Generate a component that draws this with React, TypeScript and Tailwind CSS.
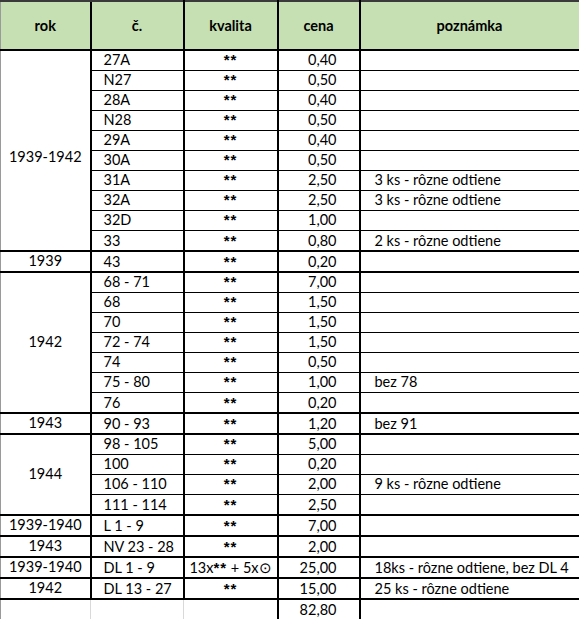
type Row = { c: string; q?: string; p: string; n?: string }
type Group = { rok: string; rows: Row[] }

const groups: Group[] = [
  {
    rok: "1939-1942",
    rows: [
      { c: "27A", p: "0,40" },
      { c: "N27", p: "0,50" },
      { c: "28A", p: "0,40" },
      { c: "N28", p: "0,50" },
      { c: "29A", p: "0,40" },
      { c: "30A", p: "0,50" },
      { c: "31A", p: "2,50", n: "3 ks - rôzne odtiene" },
      { c: "32A", p: "2,50", n: "3 ks - rôzne odtiene" },
      { c: "32D", p: "1,00" },
      { c: "33", p: "0,80", n: "2 ks - rôzne odtiene" },
    ],
  },
  { rok: "1939", rows: [{ c: "43", p: "0,20" }] },
  {
    rok: "1942",
    rows: [
      { c: "68 - 71", p: "7,00" },
      { c: "68", p: "1,50" },
      { c: "70", p: "1,50" },
      { c: "72 - 74", p: "1,50" },
      { c: "74", p: "0,50" },
      { c: "75 - 80", p: "1,00", n: "bez 78" },
      { c: "76", p: "0,20" },
    ],
  },
  { rok: "1943", rows: [{ c: "90 - 93", p: "1,20", n: "bez 91" }] },
  {
    rok: "1944",
    rows: [
      { c: "98 - 105", p: "5,00" },
      { c: "100", p: "0,20" },
      { c: "106 - 110", p: "2,00", n: "9 ks - rôzne odtiene" },
      { c: "111 - 114", p: "2,50" },
    ],
  },
  { rok: "1939-1940", rows: [{ c: "L 1 - 9", p: "7,00" }] },
  { rok: "1943", rows: [{ c: "NV 23 - 28", p: "2,00" }] },
  {
    rok: "1939-1940",
    rows: [{ c: "DL 1 - 9", q: "13x", p: "25,00", n: "18ks - rôzne odtiene, bez DL 4" }],
  },
  { rok: "1942", rows: [{ c: "DL 13 - 27", p: "15,00", n: "25 ks - rôzne odtiene" }] },
]

function Stars() {
  return <span className="font-['Liberation_Sans',sans-serif] text-[15px] font-bold tracking-[1px]">**</span>
}

export default function App() {
  return (
    <div className="w-[579px] h-[619px] overflow-hidden bg-white text-black font-['Lato',sans-serif] text-[14.5px] leading-none">
      <table className="w-[579px] border-collapse table-fixed">
        <colgroup>
          <col className="w-[90px]" />
          <col className="w-[93px]" />
          <col className="w-[94px]" />
          <col className="w-[82px]" />
          <col className="w-[220px]" />
        </colgroup>
        <thead>
          <tr className="h-[49px] bg-[#c6e0b4] font-bold">
            <th className="border-t-2 border-b-2 border-l border-l-[#9a9a9a] border-t-[#3a3a3a] border-b-black text-center pt-[2px]">rok</th>
            <th className="border-2 border-t-[#3a3a3a] border-black text-center pt-[2px]">č.</th>
            <th className="border-2 border-t-[#3a3a3a] border-black text-center pt-[2px]">kvalita</th>
            <th className="border-2 border-t-[#3a3a3a] border-black text-center pt-[2px]">cena</th>
            <th className="border-2 border-t-[#3a3a3a] border-black text-center pt-[2px]">poznámka</th>
          </tr>
        </thead>
        <tbody>
          {groups.map((g, gi) =>
            g.rows.map((r, ri) => {
              const last = ri === g.rows.length - 1
              const rb = last ? "border-b-2" : "border-b"
              return (
                <tr key={`${gi}-${ri}`} className={last ? "h-[21px]" : "h-[20px]"}>
                  {ri === 0 && (
                    <td
                      rowSpan={g.rows.length}
                      className={`border-b-2 border-black border-l border-l-[#9a9a9a] text-center align-middle ${gi === 0 ? "pt-[14px]" : ""}`}
                    >
                      {g.rok}
                    </td>
                  )}
                  <td className={`${rb} border-x-2 border-black pl-[12px] align-bottom pb-[2px]`}>{r.c}</td>
                  <td className={`${rb} border-x-2 border-black text-center align-bottom pb-[2px] whitespace-nowrap`}>
                    {r.q ? (
                      <>
                        13x<Stars /> + 5x{"\u2299"}
                      </>
                    ) : (
                      <Stars />
                    )}
                  </td>
                  <td className={`${rb} border-x-2 border-black text-right pr-[22px] align-bottom pb-[2px]`}>{r.p}</td>
                  <td className={`${rb} border-x-2 border-black pl-[14px] align-bottom pb-[2px] whitespace-nowrap`}>{r.n ?? ""}</td>
                </tr>
              )
            })
          )}
          <tr className="h-[21px]">
            <td className="border-r border-b border-[#d9d9d9] border-l border-l-[#9a9a9a]"></td>
            <td className="border-x border-b border-[#d9d9d9]"></td>
            <td className="border-b border-[#d9d9d9]"></td>
            <td className="border-2 border-black text-right pr-[22px] align-bottom pb-[2px]">82,80</td>
            <td className="border-l-2 border-l-black border-b border-b-[#d9d9d9] border-r border-r-[#d9d9d9]"></td>
          </tr>
        </tbody>
      </table>
    </div>
  )
}
